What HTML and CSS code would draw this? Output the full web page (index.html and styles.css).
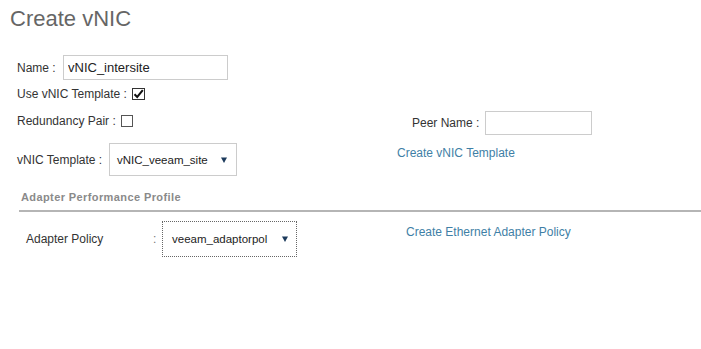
FILE: index.html
```html
<!DOCTYPE html>
<html lang="en">
<head>
    <meta charset="UTF-8">
    <meta name="viewport" content="width=device-width, initial-scale=1.0">
    <title>Create vNIC</title>
    <link rel="stylesheet" href="styles.css">
</head>
<body>
    <div class="dialog">
        <h1 class="title">Create vNIC</h1>

        <!-- Name -->
        <div class="row row-name">
            <span class="label label-name">Name :</span>
            <input class="text-input name-input" type="text" value="vNIC_intersite">
        </div>

        <!-- Use template -->
        <div class="row row-use">
            <span class="label">Use vNIC Template :</span>
            <span class="checkbox checked">
                <svg width="11" height="10" viewBox="0 0 11 10">
                    <path d="M1.5 5.2 L4.2 8 L9.8 1.2" fill="none" stroke="#111" stroke-width="2"/>
                </svg>
            </span>
        </div>

        <!-- Redundancy + peer -->
        <div class="row row-redundancy">
            <div class="cell cell-redundancy">
                <span class="label">Redundancy Pair :</span>
                <span class="checkbox"></span>
            </div>
            <span class="label label-peer">Peer Name :</span>
            <input class="text-input peer-input" type="text" value="">
        </div>

        <!-- Template select -->
        <div class="row row-template">
            <div class="cell cell-template">
                <span class="label label-template">vNIC Template :</span>
                <div class="select select-template">
                    <span>vNIC_veeam_site</span>
                    <svg class="arrow" width="6" height="6" viewBox="0 0 6 6"><polygon points="0,0.5 6,0.5 3,6" fill="#1c3a5c"/></svg>
                </div>
            </div>
            <a class="link link-template" href="#">Create vNIC Template</a>
        </div>

        <div class="section-head">Adapter Performance Profile</div>

        <!-- Adapter policy -->
        <div class="row row-adapter">
            <div class="cell cell-adapter">
                <span class="label label-adapter">Adapter Policy</span>
                <span class="colon">:</span>
                <div class="select select-adapter">
                    <span>veeam_adaptorpol</span>
                    <svg class="arrow" width="6" height="6" viewBox="0 0 6 6"><polygon points="0,0.5 6,0.5 3,6" fill="#1c3a5c"/></svg>
                </div>
            </div>
            <a class="link link-adapter" href="#">Create Ethernet Adapter Policy</a>
        </div>
    </div>
</body>
</html>
```

FILE: styles.css
```css
/* Page */
body {
    margin: 0;
    background: #ffffff;
    font-family: "Liberation Sans", Arial, sans-serif;
    color: #333333;
    overflow: hidden;
}

.dialog {
    width: 701px;
}

/* Title */
.title {
    margin: 0;
    padding: 6px 0 0 10px;
    font-size: 22px;
    font-weight: normal;
    line-height: 26px;
    color: #666666;
}

/* Form rows */
.row {
    display: flex;
    align-items: center;
    padding-left: 17px;
}

.cell {
    display: flex;
    align-items: center;
    flex: none;
}

.label {
    font-size: 12px;
    line-height: 14px;
    color: #333333;
    white-space: nowrap;
}

.row-name {
    margin-top: 23px;
    height: 25px;
}

.label-name {
    width: 46px;
}

.text-input {
    box-sizing: border-box;
    height: 25px;
    border: 1px solid #cccccc;
    margin: 0;
    padding: 0 0 0 4px;
    font-family: "Liberation Sans", Arial, sans-serif;
    font-size: 13px;
    color: #222222;
    outline: none;
}

.name-input {
    width: 165px;
}

.row-use {
    margin-top: 7px;
    height: 14px;
}

.checkbox {
    box-sizing: border-box;
    display: flex;
    align-items: center;
    justify-content: center;
    width: 12px;
    height: 12px;
    border: 1px solid #555555;
    margin-left: 5px;
}

.checkbox.checked {
    width: 13px;
    height: 12px;
    border-color: #333333;
}

.row-redundancy {
    margin-top: 10px;
    height: 24px;
}

.cell-redundancy {
    width: 395px;
    align-self: flex-start;
    margin-top: 3px;
}

.label-peer {
    width: 73px;
}

.peer-input {
    width: 107px;
    height: 24px;
}

.row-template {
    margin-top: 8px;
    height: 33px;
    align-items: flex-start;
}

.cell-template {
    width: 380px;
    height: 33px;
}

.label-template {
    width: 92px;
}

/* Dropdowns */
.select {
    box-sizing: border-box;
    display: flex;
    align-items: center;
    justify-content: space-between;
    border: 1px solid #cccccc;
    font-size: 11.5px;
    color: #222222;
}

.select-template {
    width: 128px;
    height: 33px;
    padding: 0 9px 0 7px;
}

.select-adapter {
    width: 135px;
    height: 36px;
    padding: 0 8px 0 9px;
    border: 1px dotted #666666;
}

.arrow {
    display: block;
    flex: none;
}

/* Links */
.link {
    font-size: 12px;
    line-height: 14px;
    color: #3f7fa6;
    text-decoration: none;
    white-space: nowrap;
}

.link-template {
    margin-top: 3px;
}

/* Section header */
.section-head {
    margin: 15px 0 0 19px;
    padding: 0 0 6px 2px;
    border-bottom: 2px solid #b5b5b5;
    font-size: 11px;
    line-height: 13px;
    font-weight: bold;
    letter-spacing: 0.4px;
    color: #8a8a8a;
}

.row-adapter {
    margin-top: 9px;
    height: 36px;
    padding-left: 26px;
    align-items: flex-start;
}

.cell-adapter {
    width: 380px;
    height: 36px;
}

.label-adapter {
    width: 127px;
}

.colon {
    width: 9px;
    font-size: 12px;
    color: #777777;
}

.link-adapter {
    margin-top: 4px;
}
```
